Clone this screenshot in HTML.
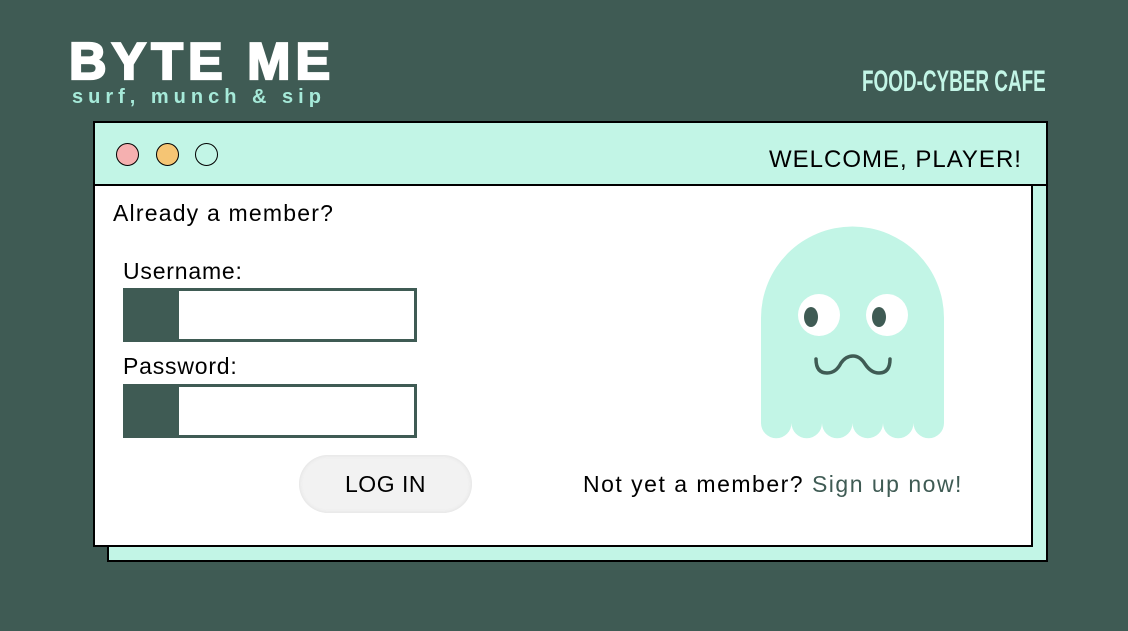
<!DOCTYPE html>
<html><head><style>
*{margin:0;padding:0;box-sizing:border-box}
body{width:1128px;height:631px;background:#3f5b54;position:relative;overflow:hidden;font-family:"Liberation Sans",sans-serif}
.t{position:absolute;white-space:nowrap}
</style></head><body>
<div class="t" style="left:69px;top:34px;font-size:52px;font-weight:bold;color:#fff;letter-spacing:5px;-webkit-text-stroke:2.2px #fff;line-height:56px">BYTE ME</div>
<div class="t" style="left:72px;top:85px;font-size:20px;color:#a6ead9;letter-spacing:5px;line-height:24px;font-weight:bold">surf, munch &amp; sip</div>
<div class="t" style="left:862px;top:66px;font-size:30px;font-weight:bold;color:#c2f5e6;line-height:32px;transform:scaleX(0.63);transform-origin:left">FOOD-CYBER CAFE</div>

<div style="position:absolute;left:107px;top:135px;width:941px;height:427px;background:#c2f5e6;border:2px solid #000"></div>
<div style="position:absolute;left:93px;top:184px;width:940px;height:363px;background:#fff;border:2px solid #000"></div>
<div style="position:absolute;left:93px;top:121px;width:955px;height:65px;background:#c2f5e6;border:2px solid #000"></div>
<div style="position:absolute;left:116px;top:143px;width:23px;height:23px;border-radius:50%;background:#f5b0b0;border:1.5px solid #000"></div>
<div style="position:absolute;left:156px;top:143px;width:23px;height:23px;border-radius:50%;background:#f5c574;border:1.5px solid #000"></div>
<div style="position:absolute;left:195px;top:143px;width:23px;height:23px;border-radius:50%;background:#c2f5e6;border:1.5px solid #000"></div>
<div class="t" style="left:769px;top:146px;font-size:24px;color:#000;line-height:28px;letter-spacing:1px">WELCOME, PLAYER!</div>

<div class="t" style="left:113px;top:199px;font-size:23px;line-height:28px;letter-spacing:1.2px">Already a member?</div>
<div class="t" style="left:123px;top:257px;font-size:23px;line-height:28px;letter-spacing:0.8px">Username:</div>
<div style="position:absolute;left:123px;top:288px;width:294px;height:54px;border:3px solid #3f5b54;background:#fff;border-left:56px solid #3f5b54"></div>
<div class="t" style="left:123px;top:352px;font-size:23px;line-height:28px;letter-spacing:0.8px">Password:</div>
<div style="position:absolute;left:123px;top:384px;width:294px;height:54px;border:3px solid #3f5b54;background:#fff;border-left:56px solid #3f5b54"></div>
<div style="position:absolute;left:299px;top:455px;width:173px;height:58px;border-radius:29px;background:#f2f2f2;box-shadow:inset 0 0 4px #ddd;text-align:center;line-height:58px;font-size:23px;letter-spacing:0.5px">LOG IN</div>

<div class="t" style="left:583px;top:470px;font-size:23px;line-height:28px;letter-spacing:1.5px">Not yet a member? <span style="color:#3f5b54">Sign up now!</span></div>

<svg style="position:absolute;left:0;top:0" width="1128" height="631">
<path d="M761,318 A91.5,91.5 0 0 1 944,318 L944,423 A15.25,15.25 0 0 1 913.5,423 A15.25,15.25 0 0 1 883,423 A15.25,15.25 0 0 1 852.5,423 A15.25,15.25 0 0 1 822,423 A15.25,15.25 0 0 1 791.5,423 A15.25,15.25 0 0 1 761,423 Z" fill="#c2f5e6"/>
<circle cx="819" cy="315" r="21" fill="#fff"/><circle cx="887" cy="315" r="21" fill="#fff"/>
<ellipse cx="811" cy="317" rx="7" ry="10" fill="#3f5b54"/><ellipse cx="879" cy="317" rx="7" ry="10" fill="#3f5b54"/>
<path d="M816,359 Q816,373 827,373 Q836,373 841,363 Q846,356 853,356 Q860,356 865,364 Q871,373 879,373 Q890,373 890,359" fill="none" stroke="#3f5b54" stroke-width="3.5" stroke-linecap="round"/>
</svg>
</body></html>
